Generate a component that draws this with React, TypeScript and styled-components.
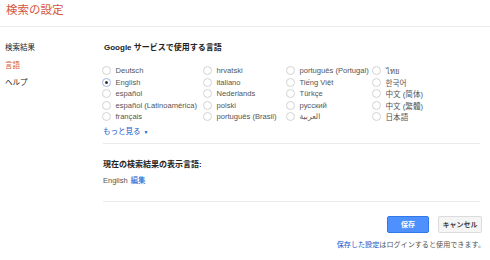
import { createGlobalStyle, styled } from 'styled-components'

const GlobalStyle = createGlobalStyle`
  body {
    margin: 0;
    background: #fff;
    font-family: 'Liberation Sans', Arial, 'Noto Sans CJK JP', 'DejaVu Sans', sans-serif;
    color: #222;
  }
`

const Page = styled.div`
  width: 490px;
  height: 260px;
  overflow: hidden;
`

const Header = styled.header`
  height: 26px;
  border-bottom: 1px solid #ebebeb;
  padding-left: 6px;
  font-size: 11.5px;
  line-height: 20px;
  color: #d5553f;
`

const Body = styled.div`
  display: flex;
  padding-top: 12px;
`

const Sidebar = styled.nav`
  width: 102px;
  flex-shrink: 0;
  padding-left: 5px;
  box-sizing: border-box;
`

const NavItem = styled.div<{ $active?: boolean }>`
  font-size: 7.5px;
  line-height: 17.5px;
  color: ${props => (props.$active ? '#d5553f' : '#222')};
`

const Content = styled.main`
  flex: 1;
  padding-right: 10px;
`

const SectionTitle = styled.div`
  font-size: 8px;
  font-weight: bold;
  line-height: 18px;
  padding-left: 2px;
  color: #222;
`

const LangGrid = styled.div`
  display: grid;
  grid-template-columns: 101px 83px 86px auto;
  grid-auto-rows: 11.5px;
  margin-top: 8px;
`

const LangOption = styled.label`
  display: flex;
  align-items: center;
  gap: 4.5px;
  font-size: 7.6px;
  color: #555;
  white-space: nowrap;
`

const Radio = styled.span<{ $checked?: boolean }>`
  width: 9px;
  height: 9px;
  box-sizing: border-box;
  border-radius: 50%;
  border: 1px solid ${props => (props.$checked ? '#9fb6e6' : '#d3d3d3')};
  display: flex;
  align-items: center;
  justify-content: center;
  flex-shrink: 0;

  &::after {
    content: '';
    width: 3px;
    height: 3px;
    border-radius: 50%;
    background: ${props => (props.$checked ? '#333' : 'transparent')};
  }
`

const MoreLink = styled.a`
  display: block;
  margin-top: 3px;
  padding-left: 1px;
  font-size: 7.5px;
  line-height: 12px;
  color: #1155cc;
  text-decoration: none;
`

const Caret = styled.span`
  font-size: 5px;
  margin-left: 3px;
  vertical-align: middle;
`

const Divider = styled.div<{ $gap: number }>`
  border-top: 1px solid #ebebeb;
  margin-top: ${props => props.$gap}px;
  margin-left: 1px;
`

const CurrentBlock = styled.div`
  padding: 14px 0 13px 1px;
`

const CurrentTitle = styled.div`
  font-size: 8px;
  font-weight: bold;
  line-height: 14px;
  color: #222;
`

const CurrentValue = styled.div`
  margin-top: 2px;
  font-size: 7.5px;
  line-height: 14px;
  color: #555;

  a {
    color: #1155cc;
    text-decoration: none;
    margin-left: 3px;
  }
`

const Footer = styled.div`
  display: flex;
  flex-direction: column;
  align-items: flex-end;
  padding-right: 5px;
`

const ButtonRow = styled.div`
  display: flex;
  gap: 9px;
  margin-top: 14px;
  padding-right: 3px;
`

const Button = styled.button<{ $primary?: boolean }>`
  height: 17px;
  width: ${props => (props.$primary ? '42px' : '44px')};
  padding: 0;
  box-sizing: border-box;
  border-radius: 2px;
  font-family: inherit;
  font-size: 7px;
  font-weight: bold;
  border: 1px solid ${props => (props.$primary ? '#3079ed' : '#dcdcdc')};
  background: ${props => (props.$primary ? '#4d90fe' : '#f5f5f5')};
  color: ${props => (props.$primary ? '#fff' : '#444')};
`

const Note = styled.div`
  margin-top: 5px;
  font-size: 7.1px;
  line-height: 14px;
  color: #555;

  a {
    color: #1155cc;
    text-decoration: none;
  }
`

const languages: { name: string; checked?: boolean }[][] = [
  [{ name: 'Deutsch' }, { name: 'hrvatski' }, { name: 'português (Portugal)' }, { name: 'ไทย' }],
  [{ name: 'English', checked: true }, { name: 'italiano' }, { name: 'Tiếng Việt' }, { name: '한국어' }],
  [{ name: 'español' }, { name: 'Nederlands' }, { name: 'Türkçe' }, { name: '中文 (简体)' }],
  [{ name: 'español (Latinoamérica)' }, { name: 'polski' }, { name: 'русский' }, { name: '中文 (繁體)' }],
  [{ name: 'français' }, { name: 'português (Brasil)' }, { name: 'العربية' }, { name: '日本語' }],
]

export default function App() {
  return (
    <Page>
      <GlobalStyle />
      <Header>検索の設定</Header>
      <Body>
        <Sidebar>
          <NavItem>検索結果</NavItem>
          <NavItem $active>言語</NavItem>
          <NavItem>ヘルプ</NavItem>
        </Sidebar>
        <Content>
          <SectionTitle>Google サービスで使用する言語</SectionTitle>
          <LangGrid>
            {languages.flat().map(lang => (
              <LangOption key={lang.name}>
                <Radio $checked={lang.checked} />
                {lang.name}
              </LangOption>
            ))}
          </LangGrid>
          <MoreLink href="#">
            もっと見る<Caret>▼</Caret>
          </MoreLink>
          <Divider $gap={5} />
          <CurrentBlock>
            <CurrentTitle>現在の検索結果の表示言語:</CurrentTitle>
            <CurrentValue>
              English<a href="#">編集</a>
            </CurrentValue>
          </CurrentBlock>
          <Divider $gap={0} />
        </Content>
      </Body>
      <Footer>
        <ButtonRow>
          <Button $primary>保存</Button>
          <Button>キャンセル</Button>
        </ButtonRow>
        <Note>
          <a href="#">保存した設定</a>はログインすると使用できます。
        </Note>
      </Footer>
    </Page>
  )
}
